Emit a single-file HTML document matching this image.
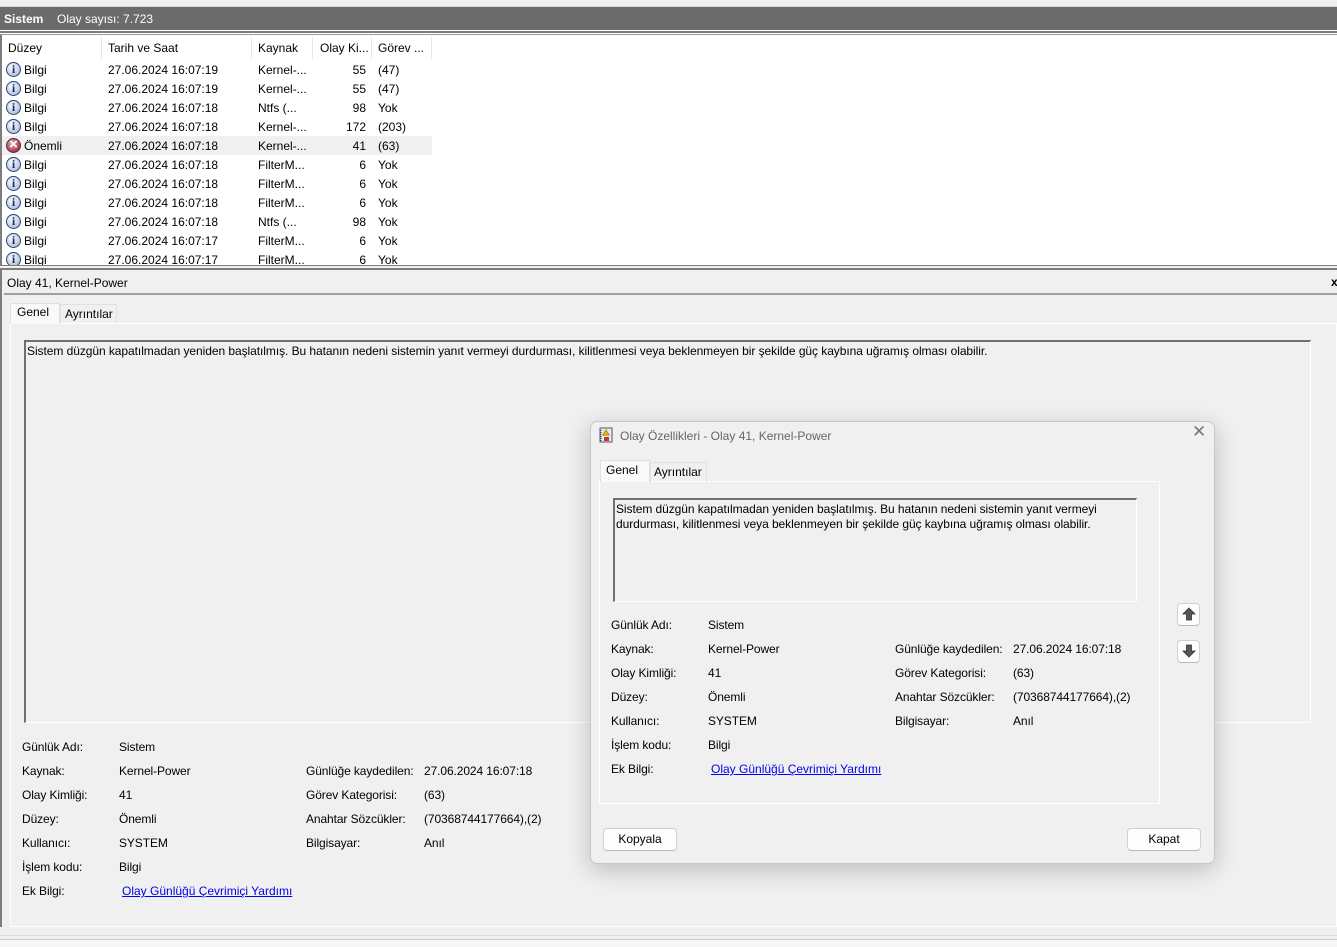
<!DOCTYPE html>
<html><head><meta charset="utf-8">
<style>
*{margin:0;padding:0;box-sizing:border-box}
body{width:1337px;height:947px;overflow:hidden;background:#f0f0f0;font-family:"Liberation Sans",sans-serif;font-size:12px;color:#000;position:relative}
.a{position:absolute}
.t{position:absolute;white-space:nowrap;line-height:14px;letter-spacing:0}
.d{letter-spacing:-0.1px}
.ic{position:absolute;width:15px;height:15px;border-radius:50%;background:radial-gradient(circle at 40% 35%,#fff,#b8c6de 70%,#6a7c9b);border:1px solid #2b4573}
.ic:after{content:"i";position:absolute;left:0;right:0;top:-1px;text-align:center;font:bold 12px "Liberation Serif",serif;color:#14306a}
.er{position:absolute;width:15px;height:15px;border-radius:50%;background:radial-gradient(circle at 40% 35%,#e8b0b8,#b04050 65%,#5d1020);border:1px solid #4b3050}
.er:after{content:"×";position:absolute;left:0;right:0;top:-3px;text-align:center;font:bold 15px "Liberation Sans",sans-serif;color:#fff}
.lnk{color:#0000ee;text-decoration:underline}
.btn{position:absolute;background:#fdfdfd;border:1px solid #d0d0d0;border-bottom-color:#b8b8b8;border-radius:4px;text-align:center;line-height:21px}
</style></head><body>
<div class="a" style="left:0;top:0;width:1337px;height:7px;background:#f0f0f0;border-bottom:1px solid #d8d8d8"></div>
<div class="a" style="left:0;top:7px;width:1337px;height:23px;background:#6b6b6b"></div>
<div class="t" style="left:4px;top:12px;color:#fff;font-weight:bold">Sistem</div>
<div class="t" style="left:57px;top:12px;color:#fff">Olay sayısı: 7.723</div>
<div class="a" style="left:0;top:30px;width:1337px;height:1px;background:#fff"></div>
<div class="a" style="left:0;top:31px;width:1337px;height:2px;background:#7d7d7d"></div>
<div class="a" style="left:0;top:33px;width:1337px;height:1px;background:#fff"></div>
<div class="a" style="left:0;top:34px;width:1337px;height:1px;background:#9a9a9a"></div>
<div class="a" style="left:0;top:35px;width:1337px;height:231px;background:#fff;border-left:2px solid #7d7d7d"></div>
<div class="a" style="left:101px;top:37px;width:1px;height:22px;background:#e5e5e5"></div>
<div class="a" style="left:251px;top:37px;width:1px;height:22px;background:#e5e5e5"></div>
<div class="a" style="left:312px;top:37px;width:1px;height:22px;background:#e5e5e5"></div>
<div class="a" style="left:371px;top:37px;width:1px;height:22px;background:#e5e5e5"></div>
<div class="a" style="left:431px;top:37px;width:1px;height:22px;background:#e5e5e5"></div>
<div class="t" style="left:8px;top:41px">Düzey</div>
<div class="t" style="left:108px;top:41px">Tarih ve Saat</div>
<div class="t" style="left:258px;top:41px">Kaynak</div>
<div class="t" style="left:320px;top:41px">Olay Ki...</div>
<div class="t" style="left:378px;top:41px">Görev ...</div>
<div class="a" style="left:2px;top:136px;width:430px;height:19px;background:#f0f0f0"></div>
<div style="position:absolute;left:0;top:0;width:440px;height:266px;overflow:hidden">
<div class="ic" style="left:6px;top:62px"></div><div class="t" style="left:24px;top:63px">Bilgi</div><div class="t" style="left:108px;top:63px">27.06.2024 16:07:19</div><div class="t" style="left:258px;top:63px">Kernel-...</div><div class="t" style="left:330px;width:36px;text-align:right;top:63px">55</div><div class="t" style="left:378px;top:63px">(47)</div>
<div class="ic" style="left:6px;top:81px"></div><div class="t" style="left:24px;top:82px">Bilgi</div><div class="t" style="left:108px;top:82px">27.06.2024 16:07:19</div><div class="t" style="left:258px;top:82px">Kernel-...</div><div class="t" style="left:330px;width:36px;text-align:right;top:82px">55</div><div class="t" style="left:378px;top:82px">(47)</div>
<div class="ic" style="left:6px;top:100px"></div><div class="t" style="left:24px;top:101px">Bilgi</div><div class="t" style="left:108px;top:101px">27.06.2024 16:07:18</div><div class="t" style="left:258px;top:101px">Ntfs (...</div><div class="t" style="left:330px;width:36px;text-align:right;top:101px">98</div><div class="t" style="left:378px;top:101px">Yok</div>
<div class="ic" style="left:6px;top:119px"></div><div class="t" style="left:24px;top:120px">Bilgi</div><div class="t" style="left:108px;top:120px">27.06.2024 16:07:18</div><div class="t" style="left:258px;top:120px">Kernel-...</div><div class="t" style="left:330px;width:36px;text-align:right;top:120px">172</div><div class="t" style="left:378px;top:120px">(203)</div>
<div class="er" style="left:6px;top:138px"></div><div class="t" style="left:24px;top:139px">Önemli</div><div class="t" style="left:108px;top:139px">27.06.2024 16:07:18</div><div class="t" style="left:258px;top:139px">Kernel-...</div><div class="t" style="left:330px;width:36px;text-align:right;top:139px">41</div><div class="t" style="left:378px;top:139px">(63)</div>
<div class="ic" style="left:6px;top:157px"></div><div class="t" style="left:24px;top:158px">Bilgi</div><div class="t" style="left:108px;top:158px">27.06.2024 16:07:18</div><div class="t" style="left:258px;top:158px">FilterM...</div><div class="t" style="left:330px;width:36px;text-align:right;top:158px">6</div><div class="t" style="left:378px;top:158px">Yok</div>
<div class="ic" style="left:6px;top:176px"></div><div class="t" style="left:24px;top:177px">Bilgi</div><div class="t" style="left:108px;top:177px">27.06.2024 16:07:18</div><div class="t" style="left:258px;top:177px">FilterM...</div><div class="t" style="left:330px;width:36px;text-align:right;top:177px">6</div><div class="t" style="left:378px;top:177px">Yok</div>
<div class="ic" style="left:6px;top:195px"></div><div class="t" style="left:24px;top:196px">Bilgi</div><div class="t" style="left:108px;top:196px">27.06.2024 16:07:18</div><div class="t" style="left:258px;top:196px">FilterM...</div><div class="t" style="left:330px;width:36px;text-align:right;top:196px">6</div><div class="t" style="left:378px;top:196px">Yok</div>
<div class="ic" style="left:6px;top:214px"></div><div class="t" style="left:24px;top:215px">Bilgi</div><div class="t" style="left:108px;top:215px">27.06.2024 16:07:18</div><div class="t" style="left:258px;top:215px">Ntfs (...</div><div class="t" style="left:330px;width:36px;text-align:right;top:215px">98</div><div class="t" style="left:378px;top:215px">Yok</div>
<div class="ic" style="left:6px;top:233px"></div><div class="t" style="left:24px;top:234px">Bilgi</div><div class="t" style="left:108px;top:234px">27.06.2024 16:07:17</div><div class="t" style="left:258px;top:234px">FilterM...</div><div class="t" style="left:330px;width:36px;text-align:right;top:234px">6</div><div class="t" style="left:378px;top:234px">Yok</div>
<div class="ic" style="left:6px;top:252px"></div><div class="t" style="left:24px;top:253px">Bilgi</div><div class="t" style="left:108px;top:253px">27.06.2024 16:07:17</div><div class="t" style="left:258px;top:253px">FilterM...</div><div class="t" style="left:330px;width:36px;text-align:right;top:253px">6</div><div class="t" style="left:378px;top:253px">Yok</div>
</div>
<div class="a" style="left:0;top:265px;width:1337px;height:1px;background:#7d7d7d"></div>
<div class="a" style="left:0;top:268px;width:1337px;height:2px;background:#7d7d7d"></div>
<div class="a" style="left:0;top:270px;width:2px;height:657px;background:#7d7d7d"></div>
<div class="t" style="left:7px;top:276px">Olay 41, Kernel-Power</div>
<div class="t" style="left:1331px;top:275px;font-weight:bold">x</div>
<div class="a" style="left:4px;top:293px;width:1333px;height:2px;background:#a0a0a0"></div>
<div class="a" style="left:10px;top:323px;width:1327px;height:604px;background:#f0f0f0;border:1px solid #fff"></div>
<div class="a" style="left:10px;top:303px;width:50px;height:21px;background:#f9f9f9;border:1px solid #e0e0e0;border-bottom:none"></div>
<div class="t" style="left:17px;top:305px">Genel</div>
<div class="a" style="left:60px;top:304px;width:57px;height:19px;border:1px solid #e0e0e0;border-bottom:none"></div>
<div class="t" style="left:65px;top:307px">Ayrıntılar</div>
<div class="a" style="left:24px;top:340px;width:1287px;height:383px;border:1px solid #fff;border-top:2px solid #6f6f6f;border-left:2px solid #6f6f6f"></div>
<div class="t" style="left:27px;top:344px;letter-spacing:-0.06px">Sistem düzgün kapatılmadan yeniden başlatılmış. Bu hatanın nedeni sistemin yanıt vermeyi durdurması, kilitlenmesi veya beklenmeyen bir şekilde güç kaybına uğramış olması olabilir.</div>
<div class="t d" style="left:22px;top:740px">Günlük Adı:</div><div class="t d" style="left:119px;top:740px">Sistem</div>
<div class="t d" style="left:22px;top:764px">Kaynak:</div><div class="t d" style="left:119px;top:764px">Kernel-Power</div>
<div class="t d" style="left:306px;top:764px">Günlüğe kaydedilen:</div><div class="t d" style="left:424px;top:764px">27.06.2024 16:07:18</div>
<div class="t d" style="left:22px;top:788px">Olay Kimliği:</div><div class="t d" style="left:119px;top:788px">41</div>
<div class="t d" style="left:306px;top:788px">Görev Kategorisi:</div><div class="t d" style="left:424px;top:788px">(63)</div>
<div class="t d" style="left:22px;top:812px">Düzey:</div><div class="t d" style="left:119px;top:812px">Önemli</div>
<div class="t d" style="left:306px;top:812px">Anahtar Sözcükler:</div><div class="t d" style="left:424px;top:812px">(70368744177664),(2)</div>
<div class="t d" style="left:22px;top:836px">Kullanıcı:</div><div class="t d" style="left:119px;top:836px">SYSTEM</div>
<div class="t d" style="left:306px;top:836px">Bilgisayar:</div><div class="t d" style="left:424px;top:836px">Anıl</div>
<div class="t d" style="left:22px;top:860px">İşlem kodu:</div><div class="t d" style="left:119px;top:860px">Bilgi</div>
<div class="t d" style="left:22px;top:884px">Ek Bilgi:</div><div class="t lnk" style="left:122px;top:884px">Olay Günlüğü Çevrimiçi Yardımı</div>
<div class="a" style="left:0;top:935px;width:1337px;height:1px;background:#dcdcdc"></div>
<div class="a" style="left:0;top:939px;width:1337px;height:1px;background:#c8c8c8"></div>
<div class="a" style="left:0;top:940px;width:1337px;height:7px;background:#f6f6f6"></div>
<div class="a" style="left:590px;top:421px;width:625px;height:443px;background:#f0f0f0;border:1px solid #c8c8c8;border-radius:7px;box-shadow:0 6px 24px rgba(0,0,0,0.22)"></div>
<svg class="a" style="left:598px;top:427px" width="16" height="16" viewBox="0 0 16 16"><rect x="2" y="1" width="12" height="14" fill="#e8e8f4" stroke="#556" /><line x1="3" y1="3" x2="3" y2="14" stroke="#334" stroke-dasharray="1 1"/><path d="M8 3 L11 8 L5 8Z" fill="#f5c400" stroke="#a80"/><rect x="6" y="10" width="5" height="4" fill="#d03030"/></svg>
<div class="t" style="left:620px;top:429px;color:#666">Olay Özellikleri - Olay 41, Kernel-Power</div>
<div class="t" style="left:1192px;top:425px;color:#777;font-size:17px">✕</div>
<div class="a" style="left:599px;top:481px;width:561px;height:323px;border:1px solid #fff"></div>
<div class="a" style="left:600px;top:460px;width:50px;height:22px;background:#f9f9f9;border:1px solid #e0e0e0;border-bottom:none"></div>
<div class="t" style="left:606px;top:463px">Genel</div>
<div class="a" style="left:650px;top:462px;width:57px;height:20px;border:1px solid #e0e0e0;border-bottom:none"></div>
<div class="t" style="left:654px;top:465px">Ayrıntılar</div>
<div class="a" style="left:613px;top:498px;width:524px;height:104px;border:1px solid #fff;border-top:2px solid #6f6f6f;border-left:2px solid #6f6f6f"></div>
<div class="t" style="left:616px;top:502px;line-height:15px;letter-spacing:-0.07px">Sistem düzgün kapatılmadan yeniden başlatılmış. Bu hatanın nedeni sistemin yanıt vermeyi<br>durdurması, kilitlenmesi veya beklenmeyen bir şekilde güç kaybına uğramış olması olabilir.</div>
<div class="t d" style="left:611px;top:618px">Günlük Adı:</div><div class="t d" style="left:708px;top:618px">Sistem</div>
<div class="t d" style="left:611px;top:642px">Kaynak:</div><div class="t d" style="left:708px;top:642px">Kernel-Power</div>
<div class="t d" style="left:895px;top:642px">Günlüğe kaydedilen:</div><div class="t d" style="left:1013px;top:642px">27.06.2024 16:07:18</div>
<div class="t d" style="left:611px;top:666px">Olay Kimliği:</div><div class="t d" style="left:708px;top:666px">41</div>
<div class="t d" style="left:895px;top:666px">Görev Kategorisi:</div><div class="t d" style="left:1013px;top:666px">(63)</div>
<div class="t d" style="left:611px;top:690px">Düzey:</div><div class="t d" style="left:708px;top:690px">Önemli</div>
<div class="t d" style="left:895px;top:690px">Anahtar Sözcükler:</div><div class="t d" style="left:1013px;top:690px">(70368744177664),(2)</div>
<div class="t d" style="left:611px;top:714px">Kullanıcı:</div><div class="t d" style="left:708px;top:714px">SYSTEM</div>
<div class="t d" style="left:895px;top:714px">Bilgisayar:</div><div class="t d" style="left:1013px;top:714px">Anıl</div>
<div class="t d" style="left:611px;top:738px">İşlem kodu:</div><div class="t d" style="left:708px;top:738px">Bilgi</div>
<div class="t d" style="left:611px;top:762px">Ek Bilgi:</div><div class="t lnk" style="left:711px;top:762px">Olay Günlüğü Çevrimiçi Yardımı</div>
<div class="btn" style="left:1177px;top:603px;width:23px;height:23px"></div>
<svg class="a" style="left:1181px;top:606px" width="16" height="16" viewBox="0 0 16 16"><path d="M8 2 L14 8 L10.5 8 L10.5 14 L5.5 14 L5.5 8 L2 8Z" fill="#555" stroke="#333" stroke-width="0.8"/></svg>
<div class="btn" style="left:1177px;top:640px;width:23px;height:23px"></div>
<svg class="a" style="left:1181px;top:643px" width="16" height="16" viewBox="0 0 16 16"><path d="M8 14 L14 8 L10.5 8 L10.5 2 L5.5 2 L5.5 8 L2 8Z" fill="#555" stroke="#333" stroke-width="0.8"/></svg>
<div class="btn" style="left:603px;top:828px;width:74px;height:23px">Kopyala</div>
<div class="btn" style="left:1127px;top:828px;width:74px;height:23px">Kapat</div>
</body></html>
